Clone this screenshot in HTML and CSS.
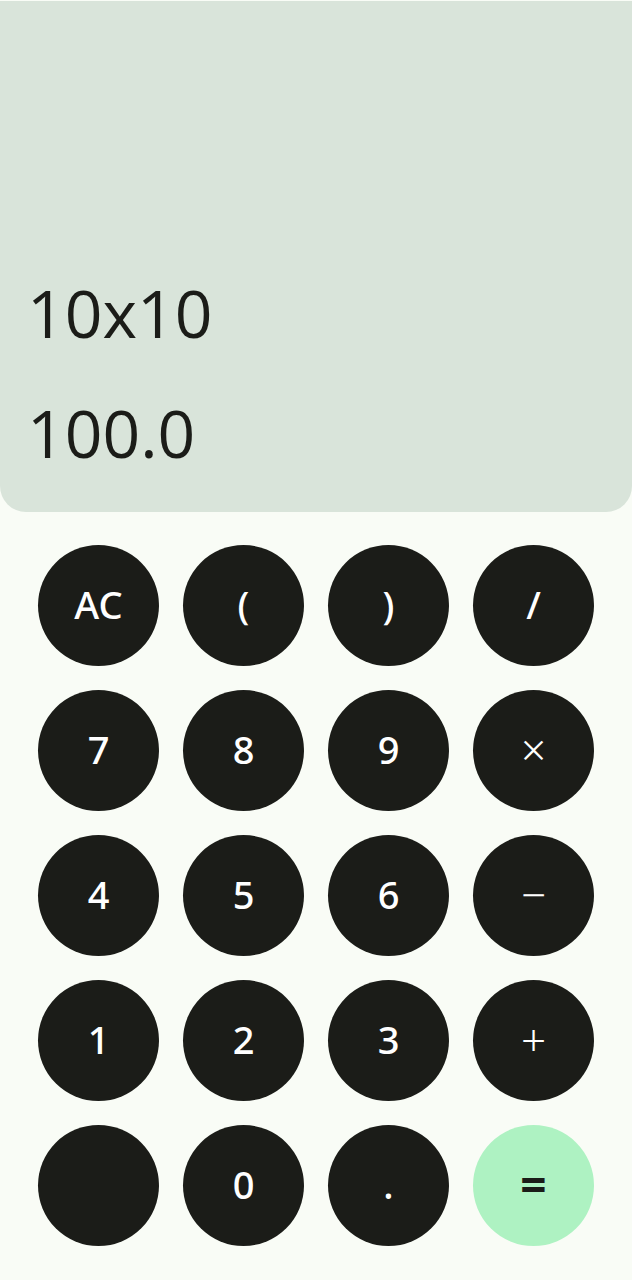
FILE: index.html
```html
<!DOCTYPE html>
<html>
<head>
<meta charset="utf-8">
<link rel="stylesheet" href="styles.css">
</head>
<body>
<div class="app">
  <div class="display">
    <div class="expr">10x10</div>
    <div class="result">100.0</div>
  </div>
  <div class="keys">
    <button class="key">AC</button>
    <button class="key">(</button>
    <button class="key">)</button>
    <button class="key">/</button>
    <button class="key">7</button>
    <button class="key">8</button>
    <button class="key">9</button>
    <button class="key op">×</button>
    <button class="key">4</button>
    <button class="key">5</button>
    <button class="key">6</button>
    <button class="key op">−</button>
    <button class="key">1</button>
    <button class="key">2</button>
    <button class="key">3</button>
    <button class="key op">+</button>
    <button class="key"></button>
    <button class="key">0</button>
    <button class="key">.</button>
    <button class="key equals">=</button>
  </div>
</div>
</body>
</html>
```
FILE: styles.css
```css
html, body {
  margin: 0;
  padding: 0;
  background: #f9fcf6;
}
.app {
  width: 632px;
  height: 1280px;
  display: flex;
  flex-direction: column;
}
.display {
  height: 511px;
  margin-top: 1px;
  background: #d9e4da;
  border-radius: 0 0 26px 26px;
  display: flex;
  flex-direction: column;
  justify-content: flex-end;
  padding: 0 0 20px 27px;
  box-sizing: border-box;
  font-family: "Open Sans", "Noto Sans", sans-serif;
  font-size: 66px;
  color: #1b1c18;
}
.expr, .result {
  height: 120px;
  line-height: 120px;
}
.keys {
  display: grid;
  grid-template-columns: repeat(4, 121px);
  grid-auto-rows: 121px;
  gap: 24px;
  padding: 33px 0 0 38px;
}
.key {
  width: 121px;
  height: 121px;
  border: none;
  border-radius: 50%;
  background: #1b1c18;
  color: #ffffff;
  font-family: "Noto Sans", "Open Sans", sans-serif;
  font-size: 38px;
  font-weight: 500;
  padding: 0 0 3px 0;
  display: flex;
  align-items: center;
  justify-content: center;
}
.key.op {
  font-size: 44px;
  font-weight: 300;
}
.equals {
  background: #aef2c2;
  color: #1b1c18;
  font-size: 46px;
  font-weight: 700;
}
```
